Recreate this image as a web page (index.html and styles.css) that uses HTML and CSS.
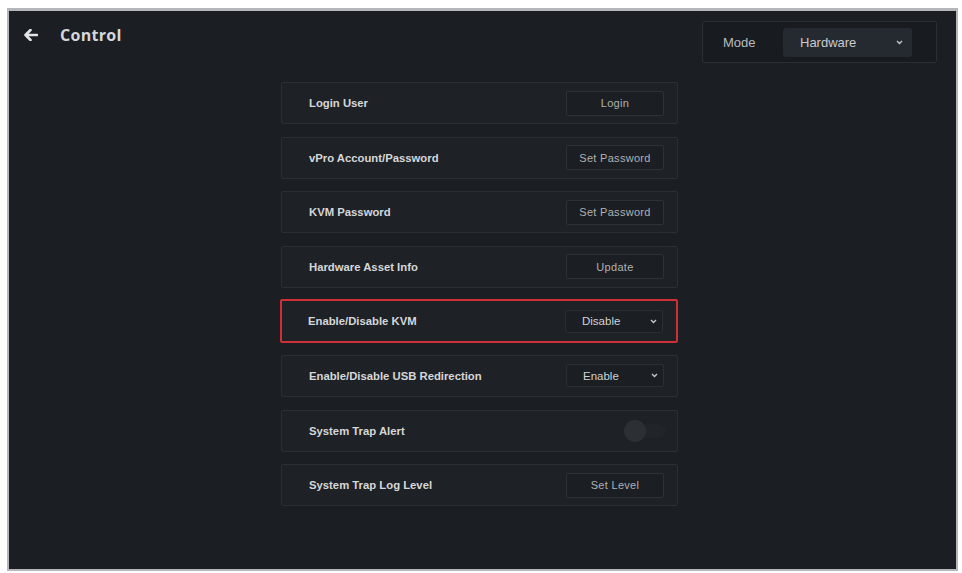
FILE: index.html
```html
<!DOCTYPE html>
<html>
<head>
<meta charset="utf-8">
<link rel="stylesheet" href="styles.css">
</head>
<body>
<div class="frame">
  <header class="header">
    <div class="title-group">
      <svg class="back" width="14" height="12" viewBox="0 0 14 12"><path d="M6.5 1 L1.5 6 L6.5 11 M1.5 6 H13" fill="none" stroke="#e2e3e4" stroke-width="2.6" stroke-linecap="round" stroke-linejoin="round"/></svg>
      <h1 class="title">Control</h1>
    </div>
    <div class="mode-box">
      <span class="mode-label">Mode</span>
      <div class="mode-select">
        <span>Hardware</span>
        <svg class="chev" width="7" height="5" viewBox="0 0 7 5"><path d="M1 1 L3.5 3.5 L6 1" fill="none" stroke="#c5c7c9" stroke-width="1.4"/></svg>
      </div>
    </div>
  </header>
  <main class="list">
    <div class="row"><span class="label">Login User</span><button class="btn">Login</button></div>
    <div class="row"><span class="label">vPro Account/Password</span><button class="btn">Set Password</button></div>
    <div class="row"><span class="label">KVM Password</span><button class="btn">Set Password</button></div>
    <div class="row"><span class="label">Hardware Asset Info</span><button class="btn">Update</button></div>
    <div class="row row-hl"><span class="label">Enable/Disable KVM</span><div class="sel"><span>Disable</span><svg class="chev" width="7" height="5" viewBox="0 0 7 5"><path d="M1 1 L3.5 3.5 L6 1" fill="none" stroke="#c5c7c9" stroke-width="1.4"/></svg></div></div>
    <div class="row"><span class="label">Enable/Disable USB Redirection</span><div class="sel"><span>Enable</span><svg class="chev" width="7" height="5" viewBox="0 0 7 5"><path d="M1 1 L3.5 3.5 L6 1" fill="none" stroke="#c5c7c9" stroke-width="1.4"/></svg></div></div>
    <div class="row"><span class="label">System Trap Alert</span><div class="toggle"><span class="knob"></span></div></div>
    <div class="row"><span class="label">System Trap Log Level</span><button class="btn">Set Level</button></div>
  </main>
</div>
</body>
</html>
```

FILE: styles.css
```css
* { box-sizing: border-box; }
html, body { margin: 0; padding: 0; background: #ffffff; }
body { font-family: "Liberation Sans", Arial, sans-serif; }

.frame {
  margin: 8px 4px 2px 7px;
  width: 951px;
  height: 563px;
  border: 2px solid #b4b6b9;
  border-top-width: 3px;
  background: #1b1e22;
  padding: 7px 19px 0 15px;
  display: flex;
  flex-direction: column;
}

.header {
  display: flex;
  justify-content: space-between;
  align-items: flex-start;
  height: 44px;
  padding-top: 3px;
}

.title-group {
  display: flex;
  align-items: center;
  padding-top: 5px;
  gap: 22px;
}
.back { display: block; }
.title {
  margin: 0;
  font-family: "Open Sans", sans-serif;
  font-weight: 700;
  font-size: 16px;
  line-height: 18px;
  color: #d6d7d9;
  letter-spacing: 0.3px;
}

.mode-box {
  width: 235px;
  height: 42px;
  border: 1px solid #2c3035;
  background: #181b1f;
  border-radius: 2px;
  display: flex;
  align-items: center;
  padding: 0 24px 0 20px;
  justify-content: space-between;
}
.mode-label { font-size: 13px; color: #b9bbbe; }
.mode-select {
  width: 129px;
  height: 29px;
  background: #252930;
  border-radius: 3px;
  display: flex;
  align-items: center;
  justify-content: space-between;
  padding: 0 9px 0 17px;
  font-size: 13px;
  color: #c9cbcd;
}
.chev { display: block; }

.list {
  margin-top: 20px;
  margin-left: 257px;
  width: 397px;
  display: flex;
  flex-direction: column;
  gap: 12.6px;
}

.row {
  height: 42px;
  background: #1e2126;
  border: 1px solid #2b2f34;
  border-radius: 2px;
  display: flex;
  align-items: center;
  justify-content: space-between;
  padding: 0 13px 0 27px;
}
.row-hl {
  border: 2px solid #cf2f37;
  padding: 0 13px 0 26px;
  height: 44px;
  margin: -1px 0;
  width: 398px;
  margin-left: -1px;
}
.label {
  font-size: 11.3px;
  font-weight: 700;
  color: #d6d7d9;
}
.btn {
  width: 98px;
  height: 25px;
  background: #1b1e22;
  border: 1px solid #2e3238;
  border-radius: 2px;
  font-family: "Liberation Sans", Arial, sans-serif;
  font-size: 11px;
  color: #b0b2b5;
  letter-spacing: 0.3px;
  padding: 0;
}
.sel {
  width: 98px;
  height: 23px;
  background: #1b1e22;
  border: 1px solid #2b2f34;
  border-radius: 2px;
  display: flex;
  align-items: center;
  justify-content: space-between;
  padding: 0 5px 0 16px;
  font-size: 11.5px;
  color: #d0d2d4;
}
.toggle {
  width: 42px;
  height: 14px;
  border-radius: 7px;
  background: #212429;
  display: flex;
  align-items: center;
  margin-right: -2px;
}
.knob {
  width: 22px;
  height: 22px;
  border-radius: 50%;
  background: #2c3035;
}
```
